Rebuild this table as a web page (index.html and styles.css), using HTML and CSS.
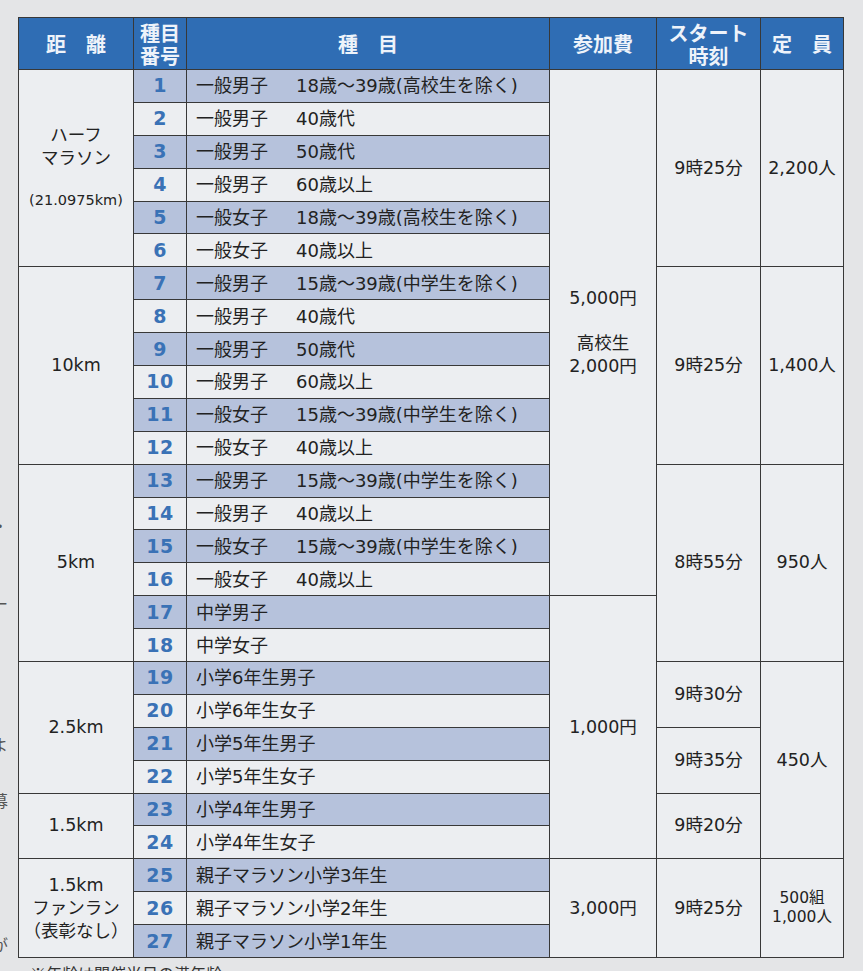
FILE: index.html
```html
<!DOCTYPE html>
<html lang="ja">
<head>
<meta charset="utf-8">
<title>種目一覧</title>
<link rel="stylesheet" href="styles.css">
</head>
<body>
<div class="page">
  <div class="edge">
    <span class="g g1">・</span>
    <span class="g g2">ー</span>
    <span class="g g3">よ</span>
    <span class="g g4">募</span>
    <span class="g g5">が</span>
  </div>
  <div class="main">
    <table class="entry">
      <colgroup>
        <col class="c-dist"><col class="c-no"><col class="c-ev"><col class="c-fee"><col class="c-time"><col class="c-cap">
      </colgroup>
      <thead>
        <tr>
          <th>距　離</th>
          <th class="h-two">種目<br>番号</th>
          <th>種　目</th>
          <th>参加費</th>
          <th class="h-two">スタート<br>時刻</th>
          <th>定　員</th>
        </tr>
      </thead>
      <tbody>
        <tr>
          <td rowspan="6" class="dist"><span class="dl">ハーフ<br>マラソン</span><span class="sub">(21.0975km)</span></td>
          <td class="no s">1</td>
          <td class="ev s"><span class="cat">一般男子</span>18歳～39歳(高校生を除く)</td>
          <td rowspan="16" class="fee">5,000円<span class="fee2">高校生<br>2,000円</span></td>
          <td rowspan="6">9時25分</td>
          <td rowspan="6">2,200人</td>
        </tr>
        <tr><td class="no">2</td><td class="ev"><span class="cat">一般男子</span>40歳代</td></tr>
        <tr><td class="no s">3</td><td class="ev s"><span class="cat">一般男子</span>50歳代</td></tr>
        <tr><td class="no">4</td><td class="ev"><span class="cat">一般男子</span>60歳以上</td></tr>
        <tr><td class="no s">5</td><td class="ev s"><span class="cat">一般女子</span>18歳～39歳(高校生を除く)</td></tr>
        <tr><td class="no">6</td><td class="ev"><span class="cat">一般女子</span>40歳以上</td></tr>

        <tr>
          <td rowspan="6">10km</td>
          <td class="no s">7</td>
          <td class="ev s"><span class="cat">一般男子</span>15歳～39歳(中学生を除く)</td>
          <td rowspan="6">9時25分</td>
          <td rowspan="6">1,400人</td>
        </tr>
        <tr><td class="no">8</td><td class="ev"><span class="cat">一般男子</span>40歳代</td></tr>
        <tr><td class="no s">9</td><td class="ev s"><span class="cat">一般男子</span>50歳代</td></tr>
        <tr><td class="no">10</td><td class="ev"><span class="cat">一般男子</span>60歳以上</td></tr>
        <tr><td class="no s">11</td><td class="ev s"><span class="cat">一般女子</span>15歳～39歳(中学生を除く)</td></tr>
        <tr><td class="no">12</td><td class="ev"><span class="cat">一般女子</span>40歳以上</td></tr>

        <tr>
          <td rowspan="6">5km</td>
          <td class="no s">13</td>
          <td class="ev s"><span class="cat">一般男子</span>15歳～39歳(中学生を除く)</td>
          <td rowspan="6">8時55分</td>
          <td rowspan="6">950人</td>
        </tr>
        <tr><td class="no">14</td><td class="ev"><span class="cat">一般男子</span>40歳以上</td></tr>
        <tr><td class="no s">15</td><td class="ev s"><span class="cat">一般女子</span>15歳～39歳(中学生を除く)</td></tr>
        <tr><td class="no">16</td><td class="ev"><span class="cat">一般女子</span>40歳以上</td></tr>
        <tr><td class="no s">17</td><td class="ev s">中学男子</td><td rowspan="8">1,000円</td></tr>
        <tr><td class="no">18</td><td class="ev">中学女子</td></tr>

        <tr>
          <td rowspan="4">2.5km</td>
          <td class="no s">19</td>
          <td class="ev s">小学6年生男子</td>
          <td rowspan="2" class="tm">9時30分</td>
          <td rowspan="6">450人</td>
        </tr>
        <tr><td class="no">20</td><td class="ev">小学6年生女子</td></tr>
        <tr><td class="no s">21</td><td class="ev s">小学5年生男子</td><td rowspan="2" class="tm">9時35分</td></tr>
        <tr><td class="no">22</td><td class="ev">小学5年生女子</td></tr>

        <tr>
          <td rowspan="2">1.5km</td>
          <td class="no s">23</td>
          <td class="ev s">小学4年生男子</td>
          <td rowspan="2" class="tm">9時20分</td>
        </tr>
        <tr><td class="no">24</td><td class="ev">小学4年生女子</td></tr>

        <tr>
          <td rowspan="3" class="fun">1.5km<br>ファンラン<br>（表彰なし）</td>
          <td class="no s">25</td>
          <td class="ev s">親子マラソン小学3年生</td>
          <td rowspan="3">3,000円</td>
          <td rowspan="3">9時25分</td>
          <td rowspan="3" class="cap2">500組<br>1,000人</td>
        </tr>
        <tr><td class="no">26</td><td class="ev">親子マラソン小学2年生</td></tr>
        <tr><td class="no s">27</td><td class="ev s">親子マラソン小学1年生</td></tr>
      </tbody>
    </table>
    <p class="note">※年齢は開催当日の満年齢</p>
  </div>
</div>
</body>
</html>
```

FILE: styles.css
```css
html, body {
  margin: 0;
  padding: 0;
}

body {
  background: #e4e5e7;
  font-family: "Noto Sans CJK JP", "Noto Sans", sans-serif;
  color: #222;
  height: 971px;
  overflow: hidden;
}

.page {
  display: grid;
  grid-template-columns: 18px auto;
  padding-top: 17px;
}

.edge {
  display: flex;
  flex-direction: column;
  overflow: hidden;
  font-size: 16px;
  line-height: 16px;
  color: #555;
}

.g {
  display: block;
  margin-left: -8px;
}

.g1 { margin-top: 500px; }
.g2 { margin-top: 62px; }
.g3 { margin-top: 125px; }
.g4 { margin-top: 40px; }
.g5 { margin-top: 128px; }

.entry {
  border-collapse: collapse;
  table-layout: fixed;
  width: 825px;
}

.c-dist { width: 115px; }
.c-no { width: 53px; }
.c-ev { width: 363px; }
.c-fee { width: 107px; }
.c-time { width: 104px; }
.c-cap { width: 83px; }

.entry th,
.entry td {
  border: 1.5px solid #383838;
  padding: 0;
  text-align: center;
  vertical-align: middle;
}

.entry th {
  background: #2f6db4;
  color: #eef3fa;
  font-size: 20px;
  font-weight: 700;
  line-height: 23px;
  height: 51px;
}

.entry tbody tr {
  height: 32.9px;
}

.entry td {
  background: #eceef1;
  font-family: "DejaVu Sans", "Noto Sans CJK JP", sans-serif;
  font-size: 17.5px;
  line-height: 23px;
}

.entry td.no {
  font-family: "DejaVu Sans", sans-serif;
  font-weight: 700;
  font-size: 19px;
  color: #3a72b6;
  letter-spacing: 0.5px;
}

.entry td.ev {
  text-align: left;
  padding-left: 9px;
  white-space: nowrap;
  font-size: 18px;
}

.entry td.s {
  background: #b6c2dc;
}

.cat {
  display: inline-block;
  width: 100px;
}

.dl {
  display: block;
}

.sub {
  display: block;
  margin-top: 19px;
  font-size: 14.5px;
}

.fee2 {
  display: block;
  margin-top: 22px;
}

.fun {
  line-height: 31px;
}

.entry td.cap2 {
  font-size: 15.5px;
  line-height: 19px;
}

.note {
  margin: 3px 0 0 12px;
  font-size: 16px;
  color: #333;
}
```
